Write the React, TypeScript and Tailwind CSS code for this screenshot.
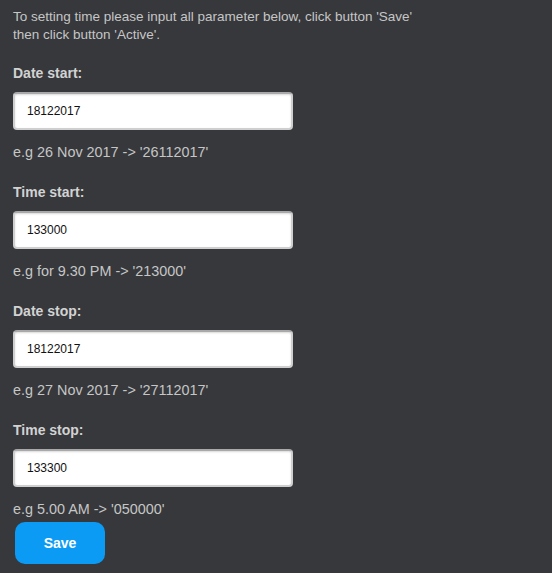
import { useState } from "react";

const fields = [
  { label: "Date start:", value: "18122017", hint: "e.g 26 Nov 2017 -> '26112017'" },
  { label: "Time start:", value: "133000", hint: "e.g for 9.30 PM -> '213000'" },
  { label: "Date stop:", value: "18122017", hint: "e.g 27 Nov 2017 -> '27112017'" },
  { label: "Time stop:", value: "133300", hint: "e.g 5.00 AM -> '050000'" },
];

export default function App() {
  const [values, setValues] = useState(fields.map((f) => f.value));

  return (
    <div className="min-h-screen bg-[#36383c] px-[13px] pt-[8px] font-['Liberation_Sans',Arial,sans-serif] text-[#c6c6c6]">
      <p className="text-[13.5px] leading-[18px]">
        To setting time please input all parameter below, click button 'Save'
        <br />
        then click button 'Active'.
      </p>
      {fields.map((f, i) => (
        <div key={f.label} className={i === 0 ? "mt-[20px]" : "mt-[22px]"}>
          <label className="block text-[14px] font-bold leading-[18px] text-[#d2d2d2]">{f.label}</label>
          <input
            className="mt-[10px] block h-[38px] w-[280px] rounded-[4px] border-2 border-[#cfcfcf] border-t-[#a9a9a9] bg-white px-[12px] text-[12px] text-[#111] shadow-[inset_0_1px_2px_rgba(0,0,0,0.15)] outline-none"
            value={values[i]}
            onChange={(e) => setValues((v) => v.map((x, j) => (j === i ? e.target.value : x)))}
          />
          <p className="mt-[13px] text-[14.4px] leading-[18px]">{f.hint}</p>
        </div>
      ))}
      <button className="ml-[2px] mt-[4px] h-[42px] w-[90px] rounded-[10px] bg-[#0b9bf5] text-[14px] font-bold text-white">
        Save
      </button>
    </div>
  );
}
